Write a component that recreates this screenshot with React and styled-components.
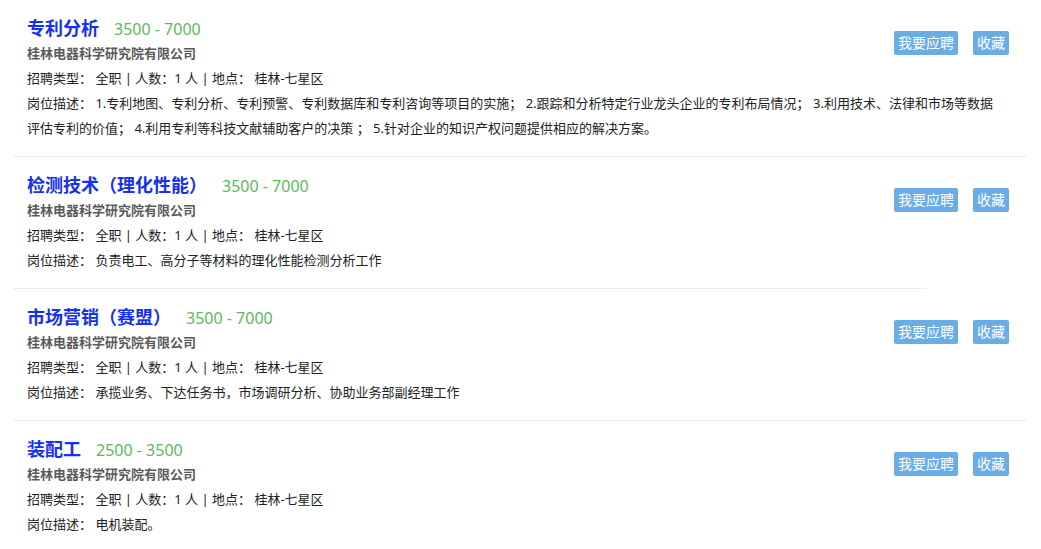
import React from 'react';
import styled, { createGlobalStyle } from 'styled-components';

const jobs = [
  {
    id: 1,
    title: '专利分析',
    salary: '3500 - 7000',
    desc: '1.专利地图、专利分析、专利预警、专利数据库和专利咨询等项目的实施； 2.跟踪和分析特定行业龙头企业的专利布局情况； 3.利用技术、法律和市场等数据评估专利的价值； 4.利用专利等科技文献辅助客户的决策 ； 5.针对企业的知识产权问题提供相应的解决方案。'
  },
  {
    id: 2,
    title: '检测技术（理化性能）',
    salary: '3500 - 7000',
    desc: '负责电工、高分子等材料的理化性能检测分析工作',
    shortRule: true
  },
  {
    id: 3,
    title: '市场营销（赛盟）',
    salary: '3500 - 7000',
    desc: '承揽业务、下达任务书，市场调研分析、协助业务部副经理工作'
  },
  {
    id: 4,
    title: '装配工',
    salary: '2500 - 3500',
    desc: '电机装配。'
  }
];

const GlobalStyle = createGlobalStyle`
  body {
    margin: 0;
    background: #fff;
    font-family: "Noto Sans", "Noto Sans CJK SC", sans-serif;
    color: #222;
  }
`;

const JobItem = ({ title, salary, desc }) => (
  <Item>
    <Actions>
      <Button>我要应聘</Button>
      <Button>收藏</Button>
    </Actions>
    <TitleRow>
      <Title>{title}</Title>
      <Salary>{salary}</Salary>
    </TitleRow>
    <Company>桂林电器科学研究院有限公司</Company>
    <Line>招聘类型： 全职 | 人数：1 人 | 地点： 桂林-七星区</Line>
    <Line>岗位描述： {desc}</Line>
  </Item>
);

const App = () => (
  <>
    <GlobalStyle />
    <List>
      {jobs.map((job, i) => (
        <React.Fragment key={job.id}>
          {i > 0 && <Rule short={jobs[i - 1].shortRule} />}
          <JobItem {...job} />
        </React.Fragment>
      ))}
    </List>
  </>
);

export default App;

const List = styled.div`
  width: 1010px;
  margin-left: 15px;
`;

const Item = styled.div`
  padding: 15px 20px 15px 12px;
  font-size: 13px;
`;

const Rule = styled.div`
  width: ${p => (p.short ? '911px' : '1010px')};
  border-top: 1px dotted #d8d8d8;
`;

const Actions = styled.div`
  float: right;
  display: flex;
  gap: 15px;
  margin-top: 16px;
  margin-right: -4px;
`;

const Button = styled.span`
  display: block;
  height: 24px;
  line-height: 24px;
  padding: 0 4px;
  font-size: 14px;
  color: #fff;
  background: #6aade4;
  border-radius: 2px;
`;

const TitleRow = styled.div`
  display: flex;
  align-items: baseline;
  height: 26px;
  line-height: 26px;
`;

const Title = styled.span`
  font-size: 18px;
  font-weight: bold;
  color: #1530f0;
`;

const Salary = styled.span`
  margin-left: 15px;
  font-size: 16px;
  color: #5cb85c;
`;

const Company = styled.div`
  line-height: 25px;
  font-weight: bold;
  color: #5a5a5a;
`;

const Line = styled.div`
  line-height: 25px;
`;
